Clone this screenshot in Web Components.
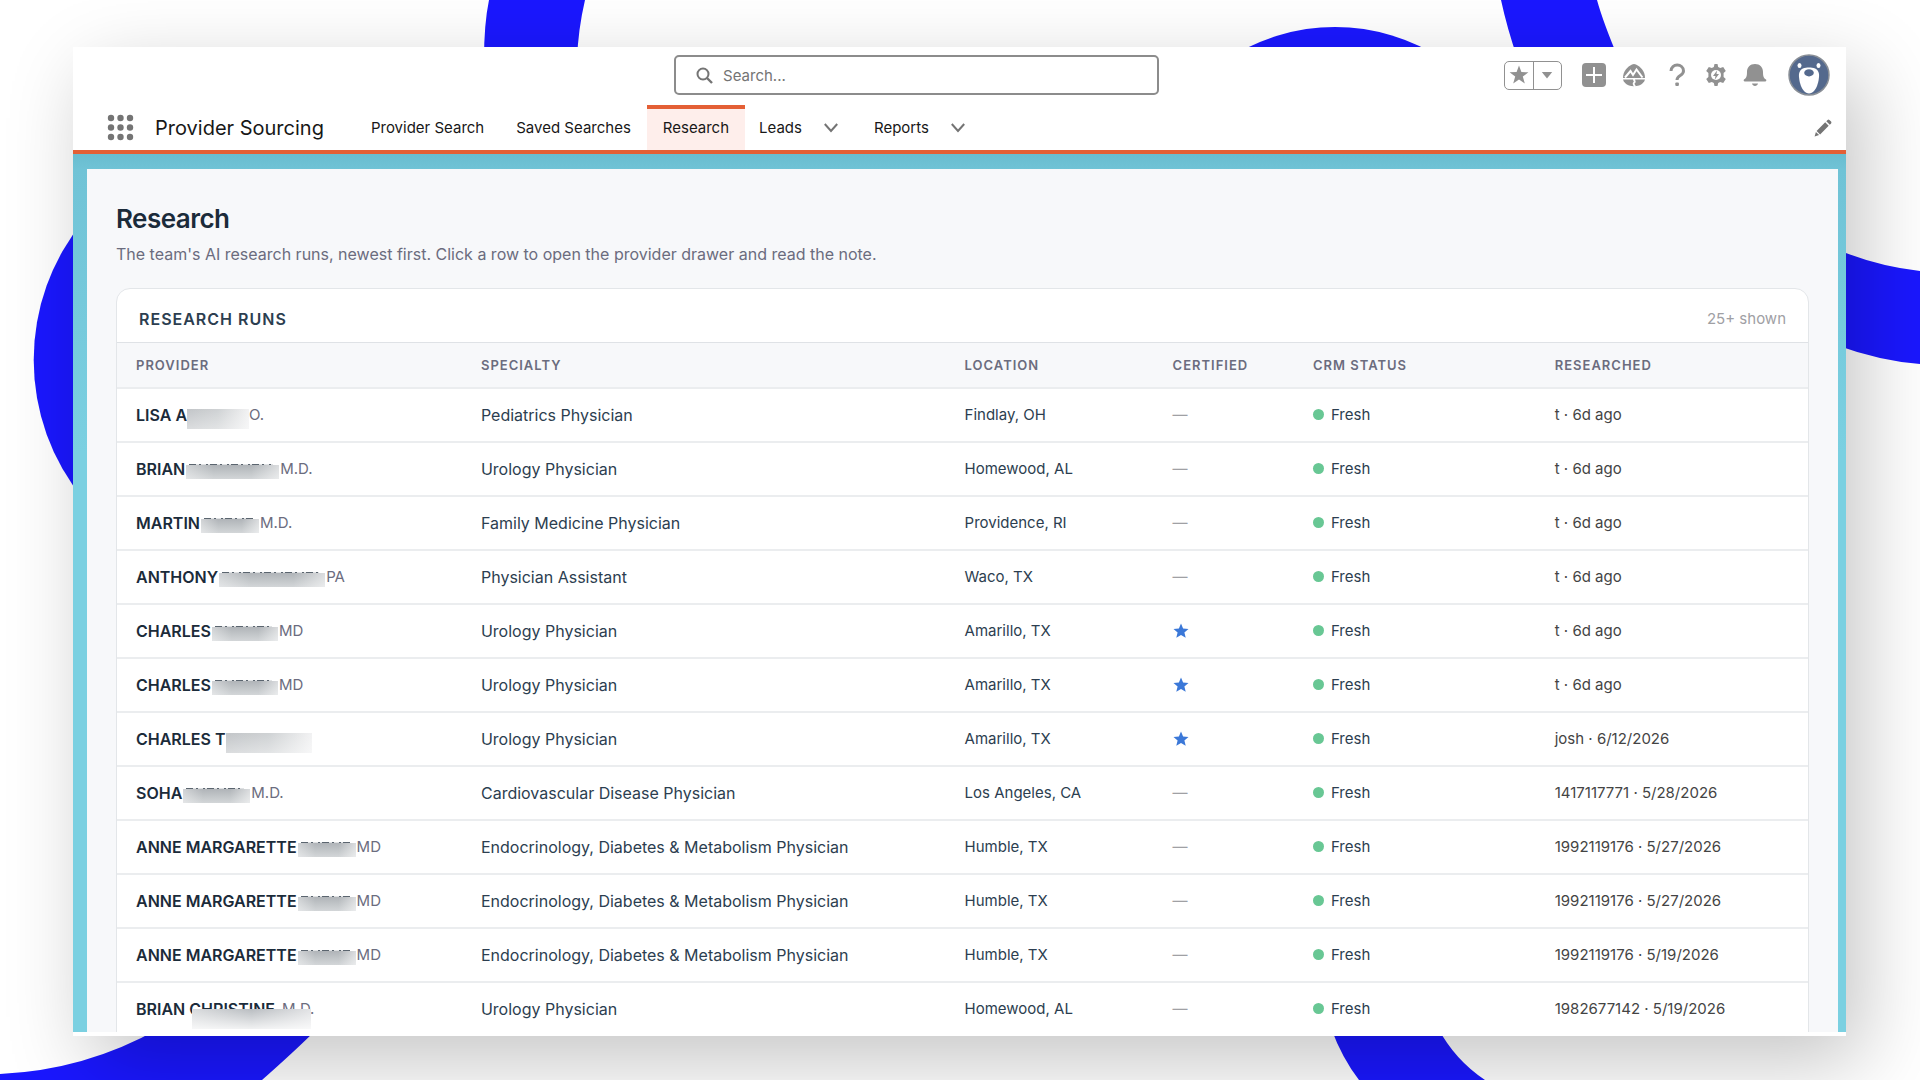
<!DOCTYPE html>
<html lang="en">
<head>
<meta charset="utf-8">
<title>Provider Sourcing</title>
<style>
  html, body {
    margin: 0;
    height: 100%;
  }
  body {
    font-family: Inter, "Liberation Sans", sans-serif;
    color: #181818;
    background: #fff;
    overflow: hidden;
  }
</style>
</head>
<body>
<brand-backdrop>
  <app-window>
    <global-header slot="header"></global-header>
    <app-nav slot="header" name="Provider Sourcing">
      <nav-tab>Provider Search</nav-tab>
      <nav-tab>Saved Searches</nav-tab>
      <nav-tab active>Research</nav-tab>
      <nav-tab menu>Leads</nav-tab>
      <nav-tab menu>Reports</nav-tab>
    </app-nav>
    <research-page>
      <span slot="title">Research</span>
      <span slot="intro">The team's AI research runs, newest first. Click a row to open the provider drawer and read the note.</span>
      <research-runs></research-runs>
    </research-page>
  </app-window>
</brand-backdrop>

<script>
(function() {
  function define(name, html, setup) {
    const template = document.createElement("template");
    template.innerHTML = html;

    window.customElements.define(name, class extends HTMLElement {
      constructor() {
        super();
        this.attachShadow({ mode: "open" });
        this.shadowRoot.appendChild(template.content.cloneNode(true));
      }

      connectedCallback() {
        if (setup) {
          setup(this, this.shadowRoot);
        }
      }
    });
  }

  // blue rings behind the window
  define("brand-backdrop", `
    <style>
      :host {
        display: flex;
        box-sizing: border-box;
        height: 100vh;
        padding: 47px 74px 44px 73px;
        position: relative;
        overflow: hidden;
      }
      svg {
        position: absolute;
        inset: 0;
        width: 100%;
        height: 100%;
      }
      ::slotted(*) {
        flex: 1;
        min-width: 0;
      }
    </style>
    <svg viewBox="0 0 1920 1080" preserveAspectRatio="none" fill="#1a17ff" aria-hidden="true">
      <path d="M489 0H585Q578 30 577 60H484Q484 24 489 0Z"/>
      <path d="M1226 60A197 197 0 0 1 1444 60Z"/>
      <path d="M1501 0H1597Q1603 22 1619 60H1518Q1507 28 1501 0Z"/>
      <path d="M84 220A220 220 0 0 0 84 500Z"/>
      <path d="M1836 249Q1876 266 1920 271V364Q1880 361 1836 345Z"/>
      <path d="M0 1074Q86 1070 160 1028H318Q296 1050 262 1080H0Z"/>
      <path d="M1331 1028H1438Q1455 1060 1485 1080H1359Q1342 1058 1331 1028Z"/>
    </svg>
    <slot></slot>
  `);

  define("app-window", `
    <style>
      :host {
        display: flex;
        flex-direction: column;
        position: relative;
        box-shadow: 16px 26px 76px rgba(0, 0, 0, 0.23);
      }
      header {
        background: #fff;
        border-bottom: 4px solid #e45f35;
      }
      main {
        flex: 1;
        min-height: 0;
        overflow: hidden;
        padding: 15px 8px 0 14px;
        background: linear-gradient(#69bccf, #70c3d6 15px, #7bd0e1 300px);
      }
      .edge {
        height: 4px;
        padding: 0 7px 0 35px;
        background: #fff;
        background-clip: content-box;
      }
    </style>
    <header><slot name="header"></slot></header>
    <main><slot></slot></main>
    <div class="edge"></div>
  `);

  define("global-header", `
    <style>
      :host {
        display: grid;
        grid-template-columns: 7fr 485px 8fr;
        align-items: center;
        height: 58px;
      }
      label {
        grid-column: 2;
        display: flex;
        align-items: center;
        gap: 10px;
        box-sizing: border-box;
        height: 40px;
        padding: 0 20px;
        border: 2px solid #8c8c8c;
        border-radius: 5px;
        margin-top: -2px;
      }
      input {
        flex: 1;
        border: 0;
        padding: 0;
        outline: 0;
        font: 15px Inter, sans-serif;
        background: none;
      }
      input::placeholder {
        color: #747474;
        opacity: 1;
      }
      .actions {
        display: flex;
        align-items: center;
        justify-content: flex-end;
        padding-right: 16px;
        gap: 15px;
        color: #919191;
        margin-top: -2px;
      }
      button {
        display: flex;
        align-items: center;
        justify-content: center;
        padding: 0;
        border: 0;
        background: none;
        color: inherit;
      }
      .favorites {
        display: flex;
        box-sizing: border-box;
        width: 58px;
        height: 29px;
        border: 1px solid #919191;
        border-radius: 5px;
        margin-right: 4px;
      }
      .favorites button {
        flex: 1;
      }
      .favorites button + button {
        border-left: 1px solid #919191;
      }
      .help {
        margin-left: 4px;
      }
      .avatar {
        margin-left: 6px;
      }
    </style>
    <label>
      <svg width="17" height="17" viewBox="0 0 17 17" fill="none" stroke="#747474" stroke-width="2" aria-hidden="true"><circle cx="7" cy="7" r="5.500"/><path d="M11 11L16 16" stroke-width="2.400"/></svg>
      <input type="search" placeholder="Search..." aria-label="Search">
    </label>
    <div class="actions">
      <div class="favorites">
        <button aria-label="Favorite"><svg width="20" height="20" viewBox="0 0 20 20" fill="currentColor"><path d="M10 .5l2.400 6.600 7 .2-5.600 4.300 2 6.900-5.800-4-5.800 4 2-6.900L.6 7.300l7-.2z"/></svg></button>
        <button aria-label="Favorites list"><svg width="12" height="8" viewBox="0 0 12 8" fill="currentColor"><path d="M.8 1h10.400L6 7.500z"/></svg></button>
      </div>
      <button aria-label="Create"><svg width="26" height="26" viewBox="0 0 26 26"><rect x="1" y="1" width="24" height="24" rx="4" fill="currentColor"/><path d="M13 5v16M5 13h16" stroke="#fff" stroke-width="2"/></svg></button>
      <button aria-label="Guidance"><svg width="24" height="24" viewBox="0 0 24 24"><path d="M1 15C1 8 5.500 3.800 10 1.500q2-1 4 0C18.500 3.800 23 8 23 15z" fill="currentColor"/><path d="M3 14.500l5.500-6.500 2.500 4L14.500 6.500 20.500 14.500" fill="none" stroke="#fff" stroke-width="2"/><path d="M1 16.500h22c-.5 2.500-3 5-6 6-3.500 1-7 1-10 0-3-1-5.500-3.500-6-6z" fill="currentColor"/><path d="M13 15.500c-3 1.500 1.500 2.500-1 4.300-.7.500-.4 2 1.200 3.700" fill="none" stroke="#fff" stroke-width="1.800"/></svg></button>
      <button class="help" aria-label="Help"><svg width="24" height="24" viewBox="0 0 24 24"><path d="M6 8C6 0 18.500.3 18.500 8c0 5-6.500 4-6.500 9" fill="none" stroke="currentColor" stroke-width="3"/><rect x="10.300" y="19.500" width="3.600" height="3.500" rx="1" fill="currentColor"/></svg></button>
      <button aria-label="Setup"><svg width="24" height="24" viewBox="0 0 24 24"><path d="M10.500 1h3l.7 3 2 1.100 3-1 2.600 3.900-2.200 2v4l2.200 2-2.600 3.900-3-1-2 1.100-.7 3h-3l-.7-3-2-1.100-3 1L2.200 16l2.200-2v-4l-2.200-2 2.600-3.900 3 1 2-1.100z" fill="currentColor"/><circle cx="12" cy="12" r="5" fill="#fff"/><path d="M13 7.500L9 13h2.500l-.8 3.700L15 11h-2.500z" fill="currentColor"/></svg></button>
      <button aria-label="Notifications"><svg width="24" height="24" viewBox="0 0 24 24" fill="currentColor"><path d="M12 1c5 0 8 3.500 8 8 0 4.500.8 6.400 3 7.600.7.600.3 1.900-.8 1.900H1.800c-1.100 0-1.500-1.300-.8-1.900C3.200 15.400 4 13.500 4 9c0-4.500 3-8 8-8zM9 20.500h6c-.5 3.300-5.500 3.300-6 0z"/></svg></button>
      <button class="avatar" aria-label="View profile"><svg width="42" height="42" viewBox="0 0 42 42"><circle cx="21" cy="21" r="20" fill="#54698d" stroke="#8a8f96" stroke-width="1.500"/><path d="M11 20C12 14 17 13.500 21 13.500S30 14 31 20c.5 5-2 19-10 19.500C13 39 10.500 25 11 20z" fill="#fff"/><ellipse cx="11.500" cy="11.500" rx="2" ry="2.600" fill="#fff"/><ellipse cx="30.500" cy="11.500" rx="2" ry="2.600" fill="#fff"/><ellipse cx="21" cy="18.800" rx="4.800" ry="3.600" fill="#54698d"/></svg></button>
    </div>
  `);

  define("app-nav", `
    <style>
      :host {
        display: flex;
        height: 45px;
        padding: 0 14px 0 34px;
      }
      button {
        align-self: center;
        display: flex;
        padding: 0;
        border: 0;
        background: none;
      }
      .name {
        align-self: center;
        font-size: 20px;
        line-height: 28px;
        margin: 0 31px 0 21px;
        white-space: nowrap;
      }
      nav {
        flex: 1;
        display: flex;
      }
    </style>
    <button aria-label="App launcher"><svg width="27" height="27" viewBox="0 0 27 27" fill="#747474"><circle cx="4" cy="4" r="3.200"/><circle cx="13.500" cy="4" r="3.200"/><circle cx="23" cy="4" r="3.200"/><circle cx="4" cy="13.500" r="3.200"/><circle cx="13.500" cy="13.500" r="3.200"/><circle cx="23" cy="13.500" r="3.200"/><circle cx="4" cy="23" r="3.200"/><circle cx="13.500" cy="23" r="3.200"/><circle cx="23" cy="23" r="3.200"/></svg></button>
    <div class="name"></div>
    <nav><slot></slot></nav>
    <button aria-label="Edit navigation"><svg width="18" height="18" viewBox="0 0 18 18" fill="#747474"><path d="M12.300 2.200l1.300-1.300q.9-.7 1.800 0l1.700 1.700q.7.900 0 1.800l-1.300 1.300zM11.200 3.300l3.500 3.500-8.600 8.600-3.500-3.500zM1.900 12.900l3.200 3.200L.6 17.400z"/></svg></button>
  `, (host, root) => {
    root.querySelector(".name").textContent = host.getAttribute("name");
  });

  define("nav-tab", `
    <style>
      :host {
        display: flex;
        align-items: center;
        padding: 0 16px;
      }
      :host([active]) {
        background: #feeeeb;
        border-top: 4px solid #e45f35;
        padding: 0 16px 4px;
      }
      a {
        color: #181818;
        font-size: 15px;
        line-height: 24px;
        text-decoration: none;
        white-space: nowrap;
      }
      button {
        display: none;
        padding: 0;
        border: 0;
        margin: 0 22px;
        background: none;
      }
      :host([menu]) {
        padding: 0 0 0 14px;
      }
      :host([menu]) button {
        display: flex;
      }
    </style>
    <a href="#"><slot></slot></a>
    <button aria-label="Open menu"><svg width="14" height="10" viewBox="0 0 14 10" fill="none" stroke="#747474" stroke-width="2"><path d="M.8 1L7 8 13.200 1"/></svg></button>
  `);

  define("research-page", `
    <style>
      :host {
        display: block;
        box-sizing: border-box;
        min-height: 100%;
        padding: 32px 29px 0;
        background: #f7f8fa;
      }
      h1 {
        margin: 0;
        font-size: 26px;
        line-height: 36px;
        font-weight: 600;
        letter-spacing: -0.02em;
        color: #1b2b3a;
      }
      p {
        margin: 5px 0 22px;
        font-size: 16px;
        line-height: 24px;
        color: #6b6c7e;
      }
    </style>
    <h1><slot name="title"></slot></h1>
    <p><slot name="intro"></slot></p>
    <slot></slot>
  `);

  define("crm-status", `
    <style>
      :host {
        display: flex;
        align-items: center;
        gap: 7px;
      }
      i {
        width: 11px;
        height: 11px;
        border-radius: 50%;
        background: #68c794;
      }
    </style>
    <i></i><slot></slot>
  `);

  // first name(s), grey bar over the surname, credential
  define("provider-name", `
    <style>
      :host {
        display: flex;
        align-items: center;
        gap: 1px;
        height: 24px;
        white-space: nowrap;
        position: relative;
      }
      b {
        font-weight: 600;
        color: #1b2b3a;
      }
      span {
        font-size: 15px;
        color: #6b6c7e;
      }
      i {
        box-sizing: border-box;
        height: 14px;
        margin-top: 6px;
        background: linear-gradient(90deg, #fff6, #fff0 30% 70%, #fff8), linear-gradient(#b0b4b8, #d3d6d8);
      }
      /* tips of the covered letters */
      i::before {
        content: "";
        display: block;
        height: 1px;
        margin: -1px 6px 0 3px;
        background: repeating-linear-gradient(90deg, #5b656f 0 7px, #dfe1e3 7px 10px, #5b656f 10px 12px, #dfe1e3 12px 17px, #5b656f 17px 19px, #dfe1e3 19px 21px);
      }
      :host([kind="tall"]) {
        gap: 0;
      }
      :host([kind="tall"]) i,
      :host([kind="over"]) i {
        height: 20px;
        margin-top: 8px;
        background: linear-gradient(#fff0, #fff6), linear-gradient(90deg, #c2c5c8, #cfd2d4 50%, #f2f2f3);
      }
      :host([kind="tall"]) i::before,
      :host([kind="over"]) i::before {
        display: none;
      }
      :host([kind="over"]) {
        gap: 7px;
      }
      :host([kind="over"]) i {
        position: absolute;
        left: 56px;
        top: 12px;
        margin: 0;
        background: linear-gradient(#fff0, #fffc), linear-gradient(90deg, #d9dbdd, #b9bdc1 50%, #e2e3e5);
      }
    </style>
    <b></b><i></i><span></span>
  `, (host, root) => {
    root.querySelector("b").textContent = host.getAttribute("name");
    root.querySelector("i").style.width = host.getAttribute("bar") + "px";
    root.querySelector("span").textContent = host.getAttribute("credential");
  });

  // name, kind, bar width, credential, specialty, location, certified, researched
  const runs = [
    ["LISA A", "tall", 62, "O.", "Pediatrics Physician", "Findlay, OH", false, "t · 6d ago"],
    ["BRIAN", "", 93, "M.D.", "Urology Physician", "Homewood, AL", false, "t · 6d ago"],
    ["MARTIN", "", 58, "M.D.", "Family Medicine Physician", "Providence, RI", false, "t · 6d ago"],
    ["ANTHONY", "", 106, "PA", "Physician Assistant", "Waco, TX", false, "t · 6d ago"],
    ["CHARLES", "", 66, "MD", "Urology Physician", "Amarillo, TX", true, "t · 6d ago"],
    ["CHARLES", "", 66, "MD", "Urology Physician", "Amarillo, TX", true, "t · 6d ago"],
    ["CHARLES T", "tall", 86, "", "Urology Physician", "Amarillo, TX", true, "josh · 6/12/2026"],
    ["SOHA", "", 67, "M.D.", "Cardiovascular Disease Physician", "Los Angeles, CA", false, "1417117771 · 5/28/2026"],
    ["ANNE MARGARETTE", "", 58, "MD", "Endocrinology, Diabetes & Metabolism Physician", "Humble, TX", false, "1992119176 · 5/27/2026"],
    ["ANNE MARGARETTE", "", 58, "MD", "Endocrinology, Diabetes & Metabolism Physician", "Humble, TX", false, "1992119176 · 5/27/2026"],
    ["ANNE MARGARETTE", "", 58, "MD", "Endocrinology, Diabetes & Metabolism Physician", "Humble, TX", false, "1992119176 · 5/19/2026"],
    ["BRIAN CHRISTINE", "over", 119, "M.D.", "Urology Physician", "Homewood, AL", false, "1982677142 · 5/19/2026"]
  ];

  const star = `<svg width="16" height="16" viewBox="0 0 16 16" fill="#3b78d8" role="img" aria-label="Certified"><path d="M8 .5l2.100 5 5.400.4-4.100 3.500 1.300 5.300L8 11.900l-4.700 2.800 1.300-5.300L.5 5.900l5.400-.4z"/></svg>`;

  define("research-runs", `
    <style>
      :host {
        display: block;
        background: #fff;
        border: 1px solid #e3e6e9;
        border-radius: 14px 14px 0 0;
        overflow: hidden;
      }
      .top {
        display: flex;
        align-items: center;
        justify-content: space-between;
        height: 53px;
        padding: 6px 22px 0;
        box-sizing: border-box;
      }
      h2 {
        margin: 0;
        font-size: 16px;
        font-weight: 600;
        letter-spacing: 1px;
        color: #2c3e50;
      }
      .count {
        font-size: 15px;
        color: #a0a0a4;
      }
      table {
        width: 100%;
        table-layout: fixed;
        border-collapse: collapse;
      }
      th {
        box-sizing: border-box;
        height: 45px;
        padding: 0 19px;
        text-align: left;
        font-size: 13px;
        font-weight: 600;
        letter-spacing: 1px;
        color: #6b6c7e;
        background: #f7f8fa;
        border-top: 1px solid #dfe2e6;
        border-bottom: 2px solid #ebedef;
      }
      td {
        box-sizing: border-box;
        height: 54px;
        padding: 0 19px;
        font-size: 16px;
        line-height: 24px;
        color: #2c3e50;
        border-bottom: 2px solid #ebedef;
        white-space: nowrap;
      }
      td:nth-child(n+3) {
        font-size: 15px;
      }
      td:last-child {
        color: #444;
      }
      td svg {
        display: block;
      }
      .none {
        color: #a0a0a4;
      }
      .provider { width: 20.4%; }
      .specialty { width: 28.6%; }
      .location { width: 12.3%; }
      .certified { width: 8.3%; }
      .status { width: 14.3%; }
    </style>
    <div class="top"><h2>RESEARCH RUNS</h2><span class="count">25+ shown</span></div>
    <table>
      <thead>
        <tr>
          <th class="provider">PROVIDER</th>
          <th class="specialty">SPECIALTY</th>
          <th class="location">LOCATION</th>
          <th class="certified">CERTIFIED</th>
          <th class="status">CRM STATUS</th>
          <th>RESEARCHED</th>
        </tr>
      </thead>
      <tbody></tbody>
    </table>
  `, (host, root) => {
    root.querySelector("tbody").innerHTML = runs.map(([name, kind, bar, credential, specialty, location, certified, researched]) => `
      <tr>
        <td><provider-name name="${name}" kind="${kind}" bar="${bar}" credential="${credential}"></provider-name></td>
        <td>${specialty.replace("&", "&amp;")}</td>
        <td>${location}</td>
        <td>${certified ? star : '<span class="none">—</span>'}</td>
        <td><crm-status>Fresh</crm-status></td>
        <td>${researched}</td>
      </tr>`).join("");
  });
})();
</script>
</body>
</html>
